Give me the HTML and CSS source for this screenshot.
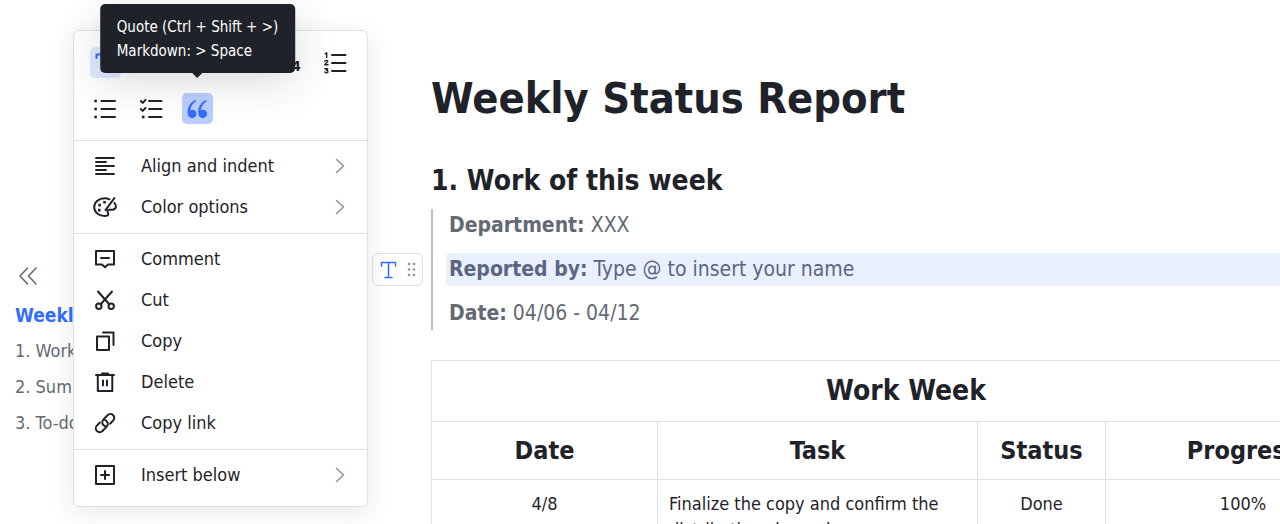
FILE: index.html
```
<!DOCTYPE html>
<html lang="en">

<head>
    <meta charset="UTF-8">
    <meta name="viewport" content="width=device-width, initial-scale=1.0">
    <title>Weekly Status Report</title>
    <link rel="stylesheet" href="styles.css">
</head>

<body>
    <div class="layout">
        <nav class="outline" aria-label="Outline">
            <button type="button" class="collapse-btn" aria-label="Collapse outline">
                <svg width="20" height="18" viewBox="0 0 20 18"><path d="M9.500 1 2 9l7.500 8M18 1l-7.500 8 7.500 8" /></svg>
            </button>
            <a href="#title" class="outline-link active">Weekly Status Report</a>
            <a href="#work" class="outline-link">1. Work of this week</a>
            <a href="#summary" class="outline-link">2. Summary</a>
            <a href="#todo" class="outline-link">3. To-dos</a>
        </nav>

        <main class="document">
            <h1 id="title">Weekly Status Report</h1>
            <h2 id="work">1. Work of this week</h2>

            <blockquote class="quote">
                <p><strong>Department:</strong> XXX</p>
                <div class="quote-row">
                    <button type="button" class="block-handle" aria-label="Block menu">
                        <svg width="42" height="20" viewBox="0 0 42 20">
                            <path class="handle-text" d="M1.500 6V2.500h14V6M8.500 2.500v15M5 17.500h7" />
                            <g class="handle-dots">
                                <circle cx="29" cy="4" r="1.300" /><circle cx="34" cy="4" r="1.300" />
                                <circle cx="29" cy="9.500" r="1.300" /><circle cx="34" cy="9.500" r="1.300" />
                                <circle cx="29" cy="15" r="1.300" /><circle cx="34" cy="15" r="1.300" />
                            </g>
                        </svg>
                    </button>
                    <p class="selected"><strong>Reported by:</strong> Type @ to insert your name</p>
                </div>
                <p><strong>Date:</strong> 04/06 - 04/12</p>
            </blockquote>

            <table class="work-table">
                <colgroup>
                    <col class="col-date">
                    <col class="col-task">
                    <col class="col-status">
                    <col class="col-progress">
                </colgroup>
                <thead>
                    <tr class="caption-row">
                        <th colspan="4">Work Week</th>
                    </tr>
                    <tr>
                        <th>Date</th>
                        <th>Task</th>
                        <th>Status</th>
                        <th>Progress</th>
                    </tr>
                </thead>
                <tbody>
                    <tr>
                        <td>4/8</td>
                        <td class="task">Finalize the copy and confirm the distribution channels</td>
                        <td>Done</td>
                        <td>100%</td>
                    </tr>
                </tbody>
            </table>
        </main>
    </div>

    <div class="block-menu">
        <div class="format-bar">
            <button type="button" class="format-btn current" aria-label="Text">
                <svg width="24" height="24" viewBox="0 0 24 24"><path d="M2.500 7V3.500h17V7M11 3.500V20M8 20h6" /></svg>
            </button>
            <button type="button" class="format-btn">H1</button>
            <button type="button" class="format-btn">H2</button>
            <button type="button" class="format-btn">H3</button>
            <button type="button" class="format-btn">H<sub>4</sub></button>
            <button type="button" class="format-btn" aria-label="Ordered list">
                <svg width="24" height="24" viewBox="1 0 24 24">
                    <path d="M9 4h13.500M9 12h13.500M9 20h13.500" />
                    <path class="thin" d="M2.200 2.800l1.500-1v4.600M1.800 10.300c.3-1.300 3-1.300 3 0 0 1-2.800 2.300-3 3.400H5M1.900 17.800h2.800l-1.300 1.500c2 0 2 2.600.1 2.600-1 0-1.500-.3-1.700-.9" />
                </svg>
            </button>
            <button type="button" class="format-btn" aria-label="Bullet list">
                <svg width="24" height="24" viewBox="1 0 24 24">
                    <path d="M8.500 4h13.500M8.500 12h13.500M8.500 20h13.500" />
                    <path class="solid" d="M1.300 2.700h2.600v2.600H1.300zM1.300 10.700h2.600v2.600H1.300zM1.300 18.700h2.600v2.600H1.300z" />
                </svg>
            </button>
            <button type="button" class="format-btn" aria-label="Task list">
                <svg width="24" height="24" viewBox="1 0 24 24">
                    <path d="M10 4h12.500M10 12h12.500M10 20h12.500M1.800 4l1.900 1.900 2.800-3M1.800 12l1.900 1.900 2.800-3" />
                    <path class="solid" d="M2.900 18.700h2.600v2.600H2.900z" />
                </svg>
            </button>
            <div class="tooltip-anchor">
                <button type="button" class="format-btn pressed" aria-label="Quote" aria-describedby="quoteTip">
                    <svg width="24" height="24" viewBox="0 0 24 24">
                        <path class="solid" d="M9.300 3.100C4.700 5.200 1.600 9.400 1.600 15c0 3.700 1.800 6 4.600 6 2.500 0 4.300-1.800 4.300-4.200s-1.700-4.100-4-4.100c-.9 0-1.600.2-2.200.5.300-3.600 2.200-6.700 5.800-9.300zM19.900 3.100c-4.600 2.100-7.700 6.300-7.700 11.900 0 3.700 1.800 6 4.600 6 2.500 0 4.300-1.800 4.300-4.200s-1.700-4.100-4-4.100c-.9 0-1.600.2-2.200.5.300-3.600 2.200-6.700 5.800-9.300z" />
                    </svg>
                </button>
                <div id="quoteTip" class="tooltip" role="tooltip">Quote (Ctrl + Shift + &gt;)<br>Markdown: &gt; Space</div>
            </div>
        </div>

        <div class="menu-group">
            <button type="button" class="menu-item">
                <svg class="icon" width="24" height="24" viewBox="0 0 24 24"><path d="M3 4h18M3 8h10M3 12h18M3 16h10M3 20h18" /></svg>
                Align and indent
                <svg class="arrow" width="10" height="16" viewBox="0 0 10 16"><path d="M1.500 1.500 8.500 8l-7 6.500" /></svg>
            </button>
            <button type="button" class="menu-item">
                <svg class="icon" width="24" height="24" viewBox="0 0 24 24">
                    <path d="M16.500 4.300C15 3.600 13.500 3.200 12 3.200 5.800 3.200 1.200 7.200 1.200 12.200s4.700 8.800 10.300 8.800c1.600 0 3.800 0 3.800-2 0-1-.8-1.500-.8-2.600 0-1 .8-1.700 1.900-1.700h3c1.800 0 3.500-1.200 3.500-3.100 0-1.500-.6-2.700-1.500-3.700M21.500 3 12.500 15.200" />
                    <path class="solid" d="M5.300 8.800h2.600v2.600H5.300zM10.200 6h2.600v2.600h-2.600zM5 13.800h2.600v2.600H5z" />
                </svg>
                Color options
                <svg class="arrow" width="10" height="16" viewBox="0 0 10 16"><path d="M1.500 1.500 8.500 8l-7 6.500" /></svg>
            </button>
        </div>

        <div class="menu-group">
            <button type="button" class="menu-item">
                <svg class="icon" width="24" height="24" viewBox="0 0 24 24"><path d="M3 4h18v13.500h-6L12 20.300l-3-2.800H3zM8 11h8" /></svg>
                Comment
            </button>
            <button type="button" class="menu-item">
                <svg class="icon" width="24" height="24" viewBox="0 0 24 24">
                    <path d="M5 3.500l11.500 13M19 3.500 7.500 16.500" />
                    <circle cx="5.800" cy="18.200" r="2.700" /><circle cx="18.200" cy="18.200" r="2.700" />
                </svg>
                Cut
            </button>
            <button type="button" class="menu-item">
                <svg class="icon" width="24" height="24" viewBox="0 0 24 24"><path d="M4 7.500h12v13.500H4zM10 3.500h10.500V16" /></svg>
                Copy
            </button>
            <button type="button" class="menu-item">
                <svg class="icon" width="24" height="24" viewBox="0 0 24 24"><path d="M3 5h18M9 3.500h6M4.800 5v16h14.500V5M10 10.500v5M14 10.500v5" /></svg>
                Delete
            </button>
            <button type="button" class="menu-item">
                <svg class="icon" width="24" height="24" viewBox="0 0 24 24">
                    <path d="M12.500 15.300c-3-.7-4.500-4.300-2.200-6.700l4.200-4.400c1.600-1.600 4-1.600 5.500-.1 1.600 1.500 1.600 3.900.1 5.500l-3 3.100" />
                    <path d="M11.500 8.900c3 .7 4.500 4.300 2.200 6.700l-4.200 4.400c-1.600 1.600-4 1.600-5.500.1-1.600-1.500-1.600-3.900-.1-5.500l3-3.100" />
                </svg>
                Copy link
            </button>
        </div>

        <div class="menu-group">
            <button type="button" class="menu-item">
                <svg class="icon" width="24" height="24" viewBox="0 0 24 24"><path d="M3 3h18v18H3zM12 8v8M8 12h8" /></svg>
                Insert below
                <svg class="arrow" width="10" height="16" viewBox="0 0 10 16"><path d="M1.500 1.500 8.500 8l-7 6.500" /></svg>
            </button>
        </div>
    </div>
</body>

</html>
```
FILE: styles.css
```
:root {
    --primary-color: #336dff;
    --text-color: #1f2329;
    --muted-color: #646a73;
    --icon-color: #8f959e;
    --border-color: #dee0e3;
}

* {
    box-sizing: border-box;
}

body {
    font-family: "DejaVu Sans Condensed", "DejaVu Sans", sans-serif;
    font-size: 18px;
    color: var(--text-color);
    background-color: white;
    margin: 0;
    overflow: hidden;
}

button {
    font-family: inherit;
    color: inherit;
    background: none;
    border: none;
    padding: 0;
    cursor: pointer;
}

svg {
    display: block;
    flex: none;
    fill: none;
    stroke: currentColor;
    stroke-width: 2;
    stroke-linecap: round;
    stroke-linejoin: round;
}

.solid {
    fill: currentColor;
    stroke: none;
}

.thin {
    stroke-width: 1.4;
}

.layout {
    display: flex;
    min-height: 100vh;
}

/* Outline */
.outline {
    display: flex;
    flex-direction: column;
    flex: 0 0 431px;
    padding: 267px 15px 0;
}

.collapse-btn {
    align-self: flex-start;
    margin: 0 0 12px 3px;
    color: var(--muted-color);
}

.collapse-btn svg {
    stroke-width: 1.6;
}

.outline-link {
    line-height: 36px;
    color: var(--muted-color);
    text-decoration: none;
}

.outline-link.active {
    font-size: 19px;
    font-weight: bold;
    color: var(--primary-color);
}

/* Document */
.document {
    flex: 1;
    min-width: 0;
    padding-top: 68px;
}

h1,
h2 {
    margin: 0;
}

h1 {
    font-size: 43px;
    line-height: 60px;
}

h2 {
    margin-top: 33px;
    font-size: 28px;
    line-height: 40px;
}

.quote {
    display: flex;
    flex-direction: column;
    gap: 11px;
    margin: 8px 0 30px;
    border-left: 2px solid #bbbfc4;
    padding-left: 13px;
    font-size: 21px;
    line-height: 33px;
    color: var(--muted-color);
}

.quote p {
    margin: 0;
    padding-left: 3px;
}

.quote-row {
    position: relative;
}

.quote .selected {
    background-color: #eaf0ff;
    border-radius: 4px 0 0 4px;
    color: #5b6682;
}

.block-handle {
    position: absolute;
    top: 0;
    left: -74px;
    display: flex;
    align-items: center;
    width: 51px;
    height: 33px;
    padding-left: 7px;
    border: 1px solid var(--border-color);
    border-radius: 6px;
    background-color: white;
}

.handle-text {
    stroke: var(--primary-color);
    stroke-width: 1.5;
}

.handle-dots {
    fill: var(--icon-color);
    stroke: none;
}

/* Work table */
.work-table {
    width: 950px;
    table-layout: fixed;
    border-collapse: collapse;
}

.col-date {
    width: 226px;
}

.col-task {
    width: 320px;
}

.col-status {
    width: 128px;
}

.work-table th,
.work-table td {
    border: 1px solid var(--border-color);
    padding: 11px;
    text-align: center;
    vertical-align: top;
}

.work-table th {
    font-size: 25px;
    line-height: 35px;
}

.work-table .caption-row th {
    font-size: 28px;
    line-height: 38px;
}

.work-table td {
    line-height: 26px;
}

.work-table .task {
    text-align: left;
}

/* Block menu */
.block-menu {
    position: absolute;
    top: 30px;
    left: 73px;
    width: 295px;
    padding-bottom: 5px;
    border: 1px solid var(--border-color);
    border-radius: 6px;
    background-color: white;
    box-shadow: 0 6px 24px rgba(31, 35, 41, 0.1);
}

.format-bar {
    display: flex;
    flex-wrap: wrap;
    gap: 15px;
    padding: 16px 15px 16px 16px;
}

.format-btn {
    display: flex;
    align-items: center;
    justify-content: center;
    width: 31px;
    height: 31px;
    border-radius: 5px;
    font-size: 20px;
}

.format-btn sub {
    font-size: 14px;
    font-weight: bold;
    line-height: 1;
    padding-top: 6px;
}

.format-btn.current {
    background-color: #e0e9ff;
    color: var(--primary-color);
}

.format-btn.pressed {
    background-color: #bacefd;
    color: var(--primary-color);
}

.tooltip-anchor {
    position: relative;
}

.tooltip {
    position: absolute;
    bottom: 51px;
    left: 50%;
    transform: translateX(-50%);
    padding: 11px 17px 10px;
    border-radius: 5px;
    background-color: var(--text-color);
    box-shadow: 0 10px 40px rgba(31, 35, 41, 0.16);
    color: white;
    font-size: 15px;
    line-height: 24px;
    white-space: nowrap;
}

.tooltip::after {
    content: "";
    position: absolute;
    top: 100%;
    left: 50%;
    margin-left: -5px;
    border: 5px solid transparent;
    border-top-color: var(--text-color);
    border-bottom: none;
}

.menu-group {
    border-top: 1px solid var(--border-color);
    padding: 4px 0 6px;
}

.menu-item {
    display: flex;
    align-items: center;
    width: 100%;
    height: 41px;
    padding: 0 22px 0 19px;
    font-size: 18px;
    text-align: left;
}

.menu-item .icon {
    margin-right: 24px;
}

.menu-item .arrow {
    margin-left: auto;
    color: var(--icon-color);
    stroke-width: 1.6;
}
```
